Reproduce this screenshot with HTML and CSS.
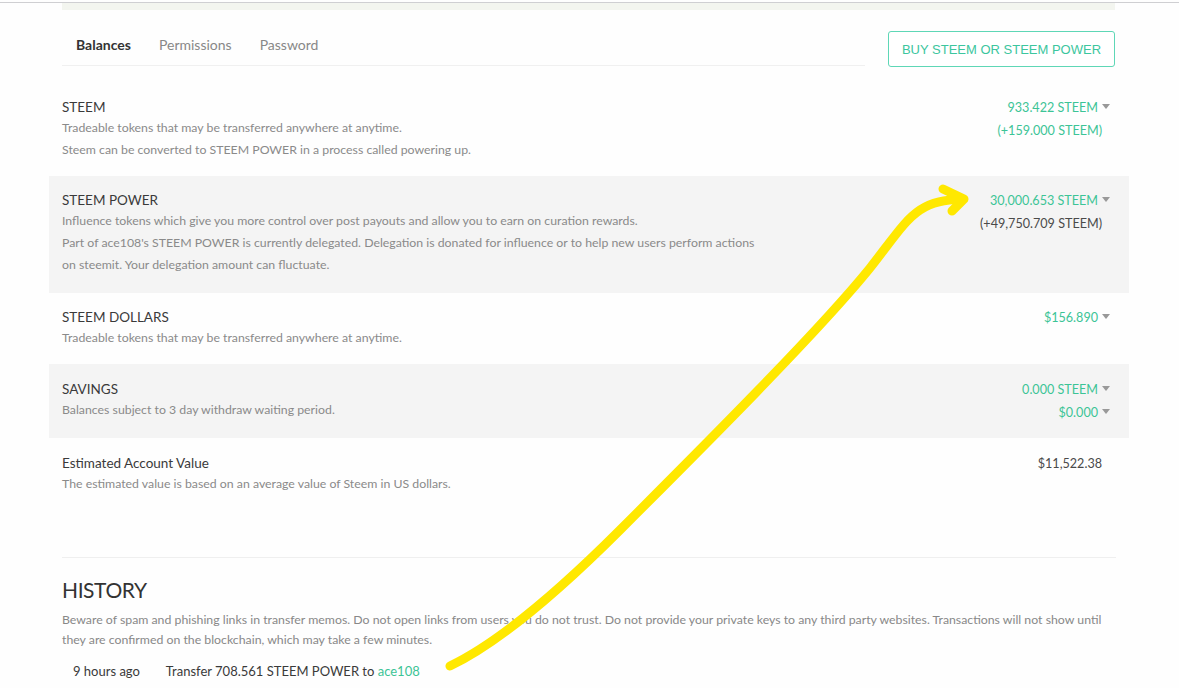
FILE: index.html
```html
<!DOCTYPE html>
<html lang="en">
<head>
  <meta charset="UTF-8">
  <meta name="viewport" content="width=device-width, initial-scale=1.0">
  <title>Wallet</title>
  <link rel="stylesheet" href="styles.css">
</head>
<body>

<div class="topline"></div>
<div class="topstrip"></div>

<div class="wallet">
  <div class="wallet-head">
    <ul class="tabs">
      <li class="active">Balances</li>
      <li>Permissions</li>
      <li>Password</li>
    </ul>
    <button class="buy-btn">BUY STEEM OR STEEM POWER</button>
  </div>

  <div class="row first">
    <div class="row-info">
      <div class="row-title">STEEM</div>
      <div class="row-desc">Tradeable tokens that may be transferred anywhere at anytime.</div>
      <div class="row-desc">Steem can be converted to STEEM POWER in a process called powering up.</div>
    </div>
    <div class="row-value">
      <div class="val green">933.422 STEEM<span class="caret"></span></div>
      <div class="val green plain">(+159.000 STEEM)</div>
    </div>
  </div>

  <div class="row grey power">
    <div class="row-info">
      <div class="row-title">STEEM POWER</div>
      <div class="row-desc">Influence tokens which give you more control over post payouts and allow you to earn on curation rewards.</div>
      <div class="row-desc">Part of ace108's STEEM POWER is currently delegated. Delegation is donated for influence or to help new users perform actions on steemit. Your delegation amount can fluctuate.</div>
    </div>
    <div class="row-value">
      <div class="val green">30,000.653 STEEM<span class="caret"></span></div>
      <div class="val plain">(+49,750.709 STEEM)</div>
    </div>
  </div>

  <div class="row">
    <div class="row-info">
      <div class="row-title">STEEM DOLLARS</div>
      <div class="row-desc">Tradeable tokens that may be transferred anywhere at anytime.</div>
    </div>
    <div class="row-value">
      <div class="val green">$156.890<span class="caret"></span></div>
    </div>
  </div>

  <div class="row grey savings">
    <div class="row-info">
      <div class="row-title">SAVINGS</div>
      <div class="row-desc">Balances subject to 3 day withdraw waiting period.</div>
    </div>
    <div class="row-value">
      <div class="val green">0.000 STEEM<span class="caret"></span></div>
      <div class="val green">$0.000<span class="caret"></span></div>
    </div>
  </div>

  <div class="row last">
    <div class="row-info">
      <div class="row-title">Estimated Account Value</div>
      <div class="row-desc">The estimated value is based on an average value of Steem in US dollars.</div>
    </div>
    <div class="row-value">
      <div class="val plain">$11,522.38</div>
    </div>
  </div>

  <div class="history">
    <h3>HISTORY</h3>
    <p class="warning">Beware of spam and phishing links in transfer memos. Do not open links from users you do not trust. Do not provide your private keys to any third party websites. Transactions will not show until they are confirmed on the blockchain, which may take a few minutes.</p>
    <div class="history-row">
      <span class="cell">9 hours ago</span>
      <span class="cell">Transfer 708.561 STEEM POWER to <a href="#">ace108</a></span>
    </div>
  </div>
</div>

<svg class="scribble" width="1179" height="688" viewBox="0 0 1179 688">
  <path d="M450 666 C500 642 560 590 620 530 C700 450 820 330 870 268 C895 236 905 220 920 210 C932 202 945 200 962 199"
        fill="none" stroke="#ffe800" stroke-width="9" stroke-linecap="round" stroke-linejoin="round"/>
  <path d="M943 189 L964 199 L952 211" fill="none" stroke="#ffe800" stroke-width="9" stroke-linecap="round" stroke-linejoin="round"/>
</svg>

</body>
</html>
```

FILE: styles.css
```css
body {
  margin: 0;
  font-family: Lato, "Open Sans", sans-serif;
  background-color: #fefefe;
  color: #333;
  position: relative;
}
.topline {
  height: 2px;
  border-bottom: 1px solid #cfcfd2;
}
.topstrip {
  height: 7px;
  margin: 0 64px 0 62px;
  background-color: #f3f5ef;
}
.wallet {
  width: 1080px;
  margin-left: 49px;
}
.wallet-head {
  display: flex;
  align-items: flex-start;
  padding: 21px 14px 0 13px;
}
.tabs {
  flex: 1;
  display: flex;
  list-style: none;
  margin: 0 23px 0 0;
  padding: 0 0 6px 0;
  border-bottom: 1px solid #f0f0f0;
}
.tabs li {
  padding: 0 14px;
  line-height: 28px;
  font-size: 14px;
  color: #888;
}
.tabs li.active {
  color: #333;
  font-weight: bold;
}
.buy-btn {
  width: 227px;
  height: 36px;
  background-color: #fff;
  border: 1px solid #5ed7b6;
  border-radius: 3px;
  color: #3cc69e;
  font-family: "Liberation Sans", Arial, sans-serif;
  font-size: 13px;
  cursor: pointer;
}
.row {
  display: flex;
  justify-content: space-between;
  align-items: flex-start;
  padding: 14px 19px 15px 13px;
}
.row.first {
  margin-top: 16px;
}
.row.power {
  padding-bottom: 17px;
}
.row.grey {
  background-color: #f4f4f4;
}
.row.savings {
  padding-top: 15px;
  padding-bottom: 14px;
}
.row.last {
  padding-top: 15px;
}
.row-info {
  width: 700px;
}
.row-title {
  font-size: 13.5px;
  line-height: 20px;
  color: #3a3a3a;
}
.row-desc {
  font-size: 12.3px;
  line-height: 22px;
  color: #8a8a8a;
}
.row-value {
  text-align: right;
  margin-top: -1px;
}
.val {
  font-size: 12.6px;
  line-height: 23px;
  color: #4a4a4a;
}
.val.green {
  color: #3cc496;
}
.val.plain {
  padding-right: 8px;
}
.caret {
  display: inline-block;
  width: 0;
  height: 0;
  margin-left: 4px;
  border-left: 4px solid transparent;
  border-right: 4px solid transparent;
  border-top: 5px solid #999;
  vertical-align: 3px;
}
.history {
  margin: 47px 13px 0 13px;
  border-top: 1px solid #efefef;
}
.history h3 {
  margin: 17px 0 5px 0;
  font-size: 21px;
  letter-spacing: -0.4px;
  line-height: 30px;
  font-weight: normal;
  color: #333;
}
.warning {
  margin: 0;
  font-size: 12.3px;
  line-height: 20px;
  color: #888;
}
.history-row {
  margin-top: 9px;
  padding-left: 11px;
  font-size: 13px;
  line-height: 24px;
  color: #3a3a3a;
}
.history-row .cell {
  padding-right: 23px;
}
.history-row a {
  color: #3cc496;
  text-decoration: none;
}
.scribble {
  position: absolute;
  top: 0;
  left: 0;
  pointer-events: none;
}
```
